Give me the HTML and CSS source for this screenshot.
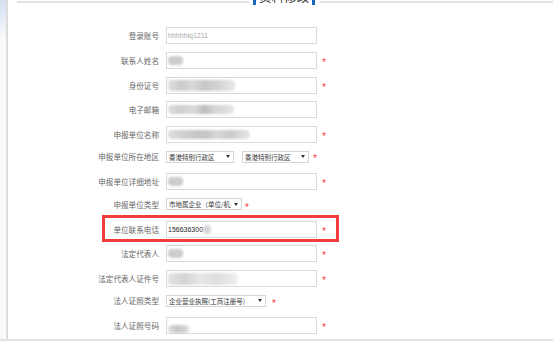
FILE: index.html
```html
<!DOCTYPE html>
<html lang="zh-CN">
<head>
    <meta charset="UTF-8">
    <meta name="viewport" content="width=device-width, initial-scale=1.0">
    <title>资料修改</title>
    <link rel="stylesheet" href="styles.css">
</head>
<body>
    <div class="page">
        <div class="edge"></div>
        <div class="panel">
            <div class="title-bar">
                <div class="line line-left"></div>
                <div class="legend">资料修改</div>
                <div class="line line-right"></div>
            </div>

            <div class="form">
                <div class="row">
                    <label class="label">登录账号</label>
                    <div class="field"><span class="hint">hhhhhlq1211</span></div>
                </div>
                <div class="row">
                    <label class="label">联系人姓名</label>
                    <div class="field"><span class="blob blob-short"></span></div>
                    <span class="star">*</span>
                </div>
                <div class="row">
                    <label class="label">身份证号</label>
                    <div class="field"><span class="blob blob-id"></span></div>
                    <span class="star">*</span>
                </div>
                <div class="row">
                    <label class="label">电子邮箱</label>
                    <div class="field"><span class="blob blob-mail"></span></div>
                </div>
                <div class="row">
                    <label class="label">申报单位名称</label>
                    <div class="field"><span class="blob blob-name"></span></div>
                    <span class="star">*</span>
                </div>
                <div class="row row-select">
                    <label class="label">申报单位所在地区</label>
                    <div class="select sel-region"><span class="sel-text">香港特别行政区</span><i class="caret"></i></div>
                    <div class="select sel-region2"><span class="sel-text">香港特别行政区</span><i class="caret"></i></div>
                    <span class="star star-sel">*</span>
                </div>
                <div class="row">
                    <label class="label">申报单位详细地址</label>
                    <div class="field"><span class="blob blob-short"></span></div>
                    <span class="star">*</span>
                </div>
                <div class="row row-select">
                    <label class="label">申报单位类型</label>
                    <div class="select sel-type"><span class="sel-text">市地属企业（单位/机关）</span><i class="caret"></i></div>
                    <span class="star star-type">*</span>
                </div>
                <div class="row row-marked">
                    <label class="label">单位联系电话</label>
                    <div class="field"><span class="value">156636300</span><span class="blob blob-tail"></span></div>
                    <span class="star">*</span>
                    <div class="mark"></div>
                </div>
                <div class="row">
                    <label class="label">法定代表人</label>
                    <div class="field"><span class="blob blob-short"></span></div>
                    <span class="star">*</span>
                </div>
                <div class="row">
                    <label class="label">法定代表人证件号</label>
                    <div class="field"><span class="blob blob-cert"></span></div>
                    <span class="star">*</span>
                </div>
                <div class="row row-select">
                    <label class="label">法人证照类型</label>
                    <div class="select sel-cert"><span class="sel-text">企业营业执照(工商注册号)</span><i class="caret"></i></div>
                    <span class="star star-cert">*</span>
                </div>
                <div class="row">
                    <label class="label">法人证照号码</label>
                    <div class="field"><span class="blob blob-code"></span></div>
                    <span class="star">*</span>
                </div>
            </div>
        </div>
    </div>
    <div class="bottom-line"></div>
</body>
</html>
```

FILE: styles.css
```css
body {
    margin: 0;
    background: #fff;
    font-family: "Noto Sans CJK SC", "Liberation Sans", sans-serif;
    overflow: hidden;
}

.page {
    display: flex;
    height: 339px;
    overflow: hidden;
}

.edge {
    width: 6px;
    background: linear-gradient(to bottom, #d3def0 0, #eef2f9 28px, #fafafa 40px, #fafafa 100%);
}

.panel {
    flex: 1;
    border-left: 2px solid #dcdcdc;
}

/* title with the blue bars, cut off by the top of the window */
.title-bar {
    display: flex;
    align-items: flex-start;
    height: 6px;
}

.line {
    margin-top: 1px;
    height: 2px;
    background: #e2e2e2;
}

.line-left {
    margin-left: 9px;
    width: 232px;
}

.line-right {
    flex: 1;
}

.legend {
    margin: -11px 5px 0 4px;
    padding: 0 3px;
    height: 16px;
    line-height: 16px;
    font-size: 12.5px;
    color: #333;
    border-left: 3px solid #1c65bd;
    border-right: 3px solid #1c65bd;
}

.form {
    margin-top: 21px;
}

.row {
    position: relative;
    display: flex;
    align-items: center;
    height: 17px;
    margin-bottom: 7.75px;
}

.row-select {
    height: 12px;
    margin-bottom: 10.5px;
}

.label {
    width: 151px;
    margin-right: 7px;
    text-align: right;
    font-size: 7.6px;
    color: #666;
    white-space: nowrap;
}

.field {
    box-sizing: border-box;
    width: 151px;
    height: 17px;
    border: 1px solid #dadada;
    display: flex;
    align-items: center;
    padding-left: 1px;
}

.hint {
    font-family: "Liberation Sans", sans-serif;
    font-size: 7px;
    color: #aaa;
}

.value {
    font-family: "Liberation Sans", sans-serif;
    font-size: 7px;
    color: #222;
}

.blob {
    display: inline-block;
    height: 10px;
    border-radius: 4px;
    background: #d2d2d2;
    filter: blur(0.8px);
}

.blob-short {
    width: 15px;
    height: 9px;
    background: #cdcdcd;
}

.blob-id {
    width: 67px;
    height: 11px;
    background: linear-gradient(to right, #dedede, #cbcbcb 20%, #d8d8d8 35%, #c6c6c6 55%, #d4d4d4 75%, #e8e8e8);
}

.blob-mail {
    width: 66px;
    height: 9px;
    background: linear-gradient(to right, #e0e0e0, #cfcfcf 15%, #d9d9d9 40%, #bdbdbd 55%, #d4d4d4 70%, #e6e6e6);
}

.blob-name {
    width: 82px;
    height: 9px;
    background: linear-gradient(to right, #e0e0e0, #cdcdcd 20%, #c4c4c4 45%, #d8d8d8 60%, #cacaca 75%, #e6e6e6);
}

.blob-tail {
    width: 8px;
    height: 9px;
    background: #d6d6d6;
}

.blob-cert {
    width: 70px;
    height: 12px;
    background: linear-gradient(to right, #e4e4e4, #d3d3d3 25%, #e8e8e8 45%, #dedede 70%, #f0f0f0);
}

.blob-code {
    width: 22px;
    height: 8px;
    margin-top: 7px;
    background: linear-gradient(to right, #e0e0e0, #c8c8c8 40%, #cfcfcf 70%, #ececec);
}

.star {
    margin-left: 5px;
    margin-top: 5px;
    font-family: "Liberation Sans", sans-serif;
    font-size: 10px;
    line-height: 10px;
    color: #f23a3a;
}

.star-sel {
    margin-left: 4px;
}

.star-type {
    margin-left: 3px;
    margin-top: 7px;
}

.star-cert {
    margin-left: 6px;
    margin-top: 7px;
}

.select {
    box-sizing: border-box;
    height: 12px;
    border: 1px solid #d5d5d5;
    display: flex;
    align-items: center;
    padding: 0 3px 0 2px;
    overflow: hidden;
}

.sel-text {
    flex: 1;
    font-size: 6.5px;
    color: #333;
    white-space: nowrap;
    overflow: hidden;
}

.caret {
    width: 0;
    height: 0;
    margin-left: 3px;
    border-left: 2px solid transparent;
    border-right: 2px solid transparent;
    border-top: 3px solid #333;
}

.sel-region {
    width: 68px;
    margin-right: 8px;
}

.sel-region2 {
    width: 67px;
}

.sel-type {
    width: 76px;
}

.sel-cert {
    width: 100px;
}

.mark {
    position: absolute;
    left: 94px;
    top: -6px;
    width: 231px;
    height: 21px;
    border: 3px solid #f23c3c;
}

.bottom-line {
    height: 2px;
    background: #e4e4e4;
}
```
